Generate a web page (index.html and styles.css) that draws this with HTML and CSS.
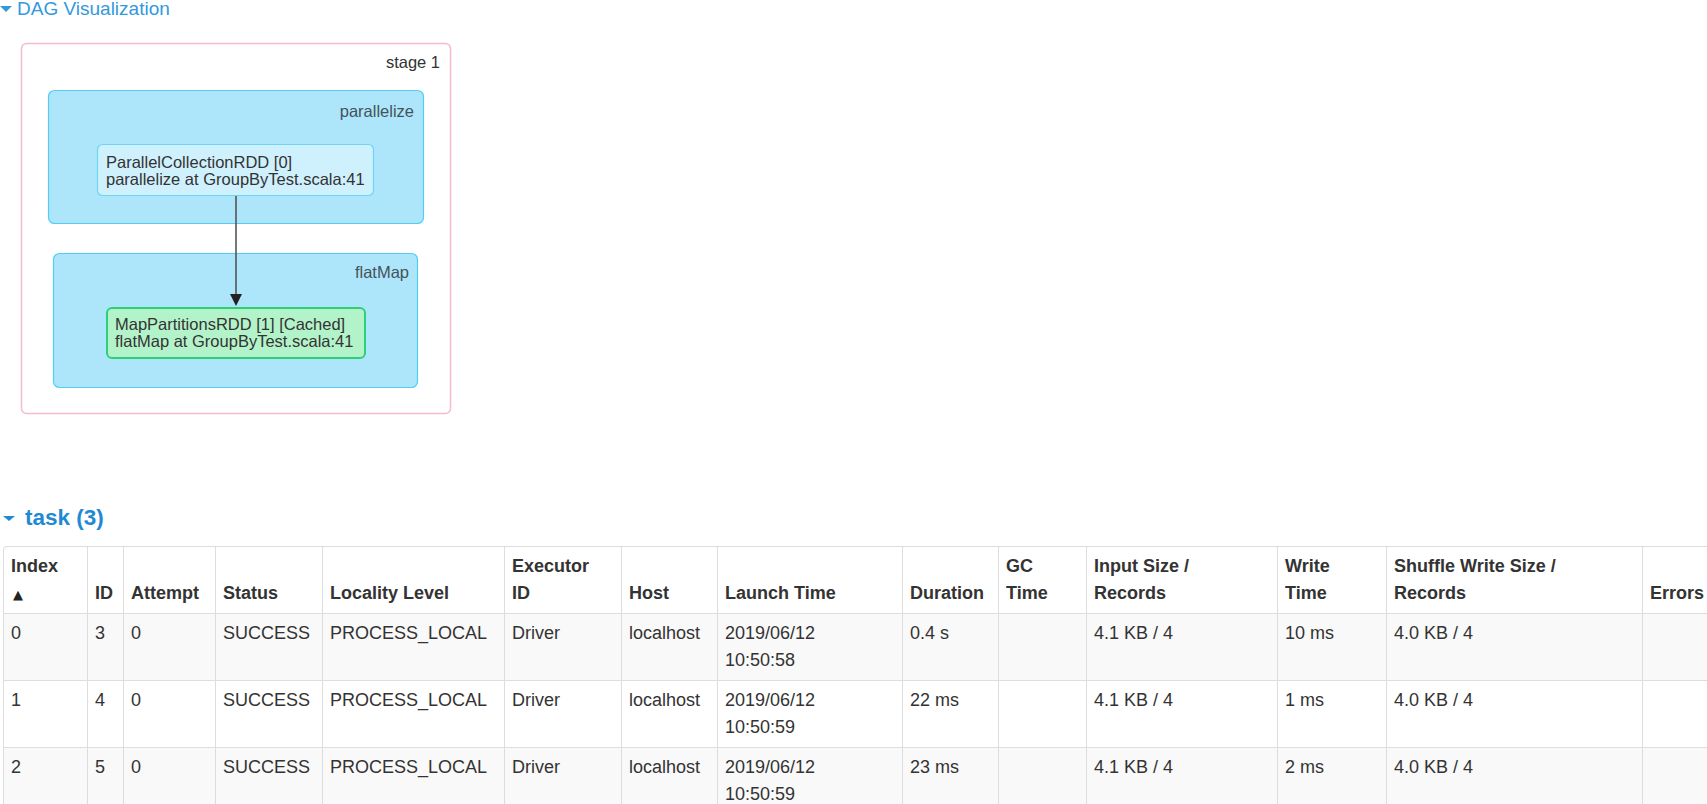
FILE: index.html
```html
<!DOCTYPE html>
<html lang="en">
<head>
<meta charset="utf-8">
<title>Stage 1</title>
<link rel="stylesheet" href="styles.css">
</head>
<body>
<div class="page">
  <div class="section-title dag-title"><span class="caret"></span><span>DAG Visualization</span></div>
  <svg class="dag" width="460" height="388" viewBox="0 0 460 388">
    <rect class="stage-box" x="21.5" y="13.5" width="429" height="370" rx="5"/>
    <text class="stage-label" x="440" y="38" text-anchor="end">stage 1</text>
    <rect class="cluster" x="48.5" y="60.5" width="375" height="133" rx="6"/>
    <text class="cluster-label" x="414" y="87" text-anchor="end">parallelize</text>
    <rect class="cluster" x="53.5" y="223.5" width="364" height="134" rx="6"/>
    <text class="cluster-label" x="409" y="248" text-anchor="end">flatMap</text>
    <rect class="node" x="97.5" y="114.5" width="276" height="51" rx="5"/>
    <text class="node-label" x="106" y="138">ParallelCollectionRDD [0]</text>
    <text class="node-label" x="106" y="154.5">parallelize at GroupByTest.scala:41</text>
    <path class="edge" d="M236 166 V265"/>
    <polygon class="arrow" points="230,264 242,264 236,276"/>
    <rect class="node cached" x="107" y="278" width="258" height="50" rx="5"/>
    <text class="node-label" x="115" y="300">MapPartitionsRDD [1] [Cached]</text>
    <text class="node-label" x="115" y="316.5">flatMap at GroupByTest.scala:41</text>
  </svg>

  <div class="section-title task-title"><span class="caret"></span><span>task (3)</span></div>

  <table class="task-table">
    <thead>
      <tr>
        <th class="c-index">Index<br><span class="sort">▲</span></th>
        <th class="c-id">ID</th>
        <th class="c-attempt">Attempt</th>
        <th class="c-status">Status</th>
        <th class="c-locality">Locality Level</th>
        <th class="c-executor">Executor<br>ID</th>
        <th class="c-host">Host</th>
        <th class="c-launch">Launch Time</th>
        <th class="c-duration">Duration</th>
        <th class="c-gc">GC<br>Time</th>
        <th class="c-input">Input Size /<br>Records</th>
        <th class="c-write">Write<br>Time</th>
        <th class="c-shuffle">Shuffle Write Size /<br>Records</th>
        <th class="c-errors">Errors</th>
      </tr>
    </thead>
    <tbody>
      <tr>
        <td>0</td><td>3</td><td>0</td><td>SUCCESS</td><td>PROCESS_LOCAL</td><td>Driver</td><td>localhost</td>
        <td>2019/06/12<br>10:50:58</td><td>0.4 s</td><td></td><td>4.1 KB / 4</td><td>10 ms</td><td>4.0 KB / 4</td><td></td>
      </tr>
      <tr>
        <td>1</td><td>4</td><td>0</td><td>SUCCESS</td><td>PROCESS_LOCAL</td><td>Driver</td><td>localhost</td>
        <td>2019/06/12<br>10:50:59</td><td>22 ms</td><td></td><td>4.1 KB / 4</td><td>1 ms</td><td>4.0 KB / 4</td><td></td>
      </tr>
      <tr>
        <td>2</td><td>5</td><td>0</td><td>SUCCESS</td><td>PROCESS_LOCAL</td><td>Driver</td><td>localhost</td>
        <td>2019/06/12<br>10:50:59</td><td>23 ms</td><td></td><td>4.1 KB / 4</td><td>2 ms</td><td>4.0 KB / 4</td><td></td>
      </tr>
    </tbody>
  </table>
</div>
</body>
</html>
```

FILE: styles.css
```css
html, body {
  margin: 0;
  padding: 0;
  overflow: hidden;
  background: #ffffff;
}

body {
  font-family: "Liberation Sans", Arial, Helvetica, sans-serif;
  color: #333333;
  width: 1707px;
  height: 804px;
}

.section-title {
  display: flex;
  align-items: center;
}

.caret {
  width: 0;
  height: 0;
  border-left: 6.5px solid transparent;
  border-right: 6.5px solid transparent;
  border-top: 6px solid currentColor;
}

.dag-title {
  height: 18px;
  font-size: 19px;
  line-height: 18px;
  color: #3399dd;
}

.dag-title .caret {
  margin-right: 5px;
}

.dag {
  display: block;
  margin-top: 12px;
}

.dag text {
  font-family: "Liberation Sans", Arial, Helvetica, sans-serif;
  font-size: 16.5px;
  fill: #333333;
}

.dag .cluster-label {
  fill: #44525a;
}

.stage-box {
  fill: #ffffff;
  stroke: #f6bccb;
  stroke-width: 1.5;
}

.cluster {
  fill: #ade6fb;
  stroke: #52cdf3;
  stroke-width: 1.2;
}

.node {
  fill: #cff1fd;
  stroke: #70d5f3;
  stroke-width: 1.2;
}

.node.cached {
  fill: #b3f3c9;
  stroke: #2fcf78;
  stroke-width: 2;
}

.edge {
  fill: none;
  stroke: #555555;
  stroke-width: 1.6;
}

.arrow {
  fill: #222222;
}

.task-title {
  height: 28px;
  margin-top: 86px;
  font-size: 22.5px;
  line-height: 28px;
  font-weight: bold;
  color: #1f8ad3;
}

.task-title .caret {
  margin-left: 3px;
  margin-right: 10px;
  border-left-width: 6px;
  border-right-width: 6px;
  border-top-width: 5px;
}

.task-table {
  margin: 14px 0 0 3px;
  width: 1750px;
  table-layout: fixed;
  border-collapse: separate;
  border-spacing: 0;
  border: 1px solid #dddddd;
  border-left: 0;
  border-radius: 4px;
  font-size: 18px;
  line-height: 27px;
}

.task-table th,
.task-table td {
  box-sizing: border-box;
  padding: 6px 7px;
  border-left: 1px solid #dddddd;
  border-top: 1px solid #dddddd;
  text-align: left;
}

.task-table thead th {
  border-top: 0;
  vertical-align: bottom;
  font-weight: bold;
  color: #333333;
}

.task-table thead th:first-child {
  border-top-left-radius: 4px;
}

.task-table td {
  vertical-align: top;
  white-space: nowrap;
}

.task-table tbody tr:nth-child(odd) td {
  background: #f9f9f9;
}

.sort {
  font-family: "DejaVu Sans", sans-serif;
  font-size: 13px;
  line-height: 0;
  margin-left: 2px;
  color: #222222;
}

.c-index { width: 84px; }
.c-id { width: 36px; }
.c-attempt { width: 92px; }
.c-status { width: 107px; }
.c-locality { width: 182px; }
.c-executor { width: 117px; }
.c-host { width: 96px; }
.c-launch { width: 185px; }
.c-duration { width: 96px; }
.c-gc { width: 88px; }
.c-input { width: 191px; }
.c-write { width: 109px; }
.c-shuffle { width: 256px; }
.c-errors { width: 110px; }
```
